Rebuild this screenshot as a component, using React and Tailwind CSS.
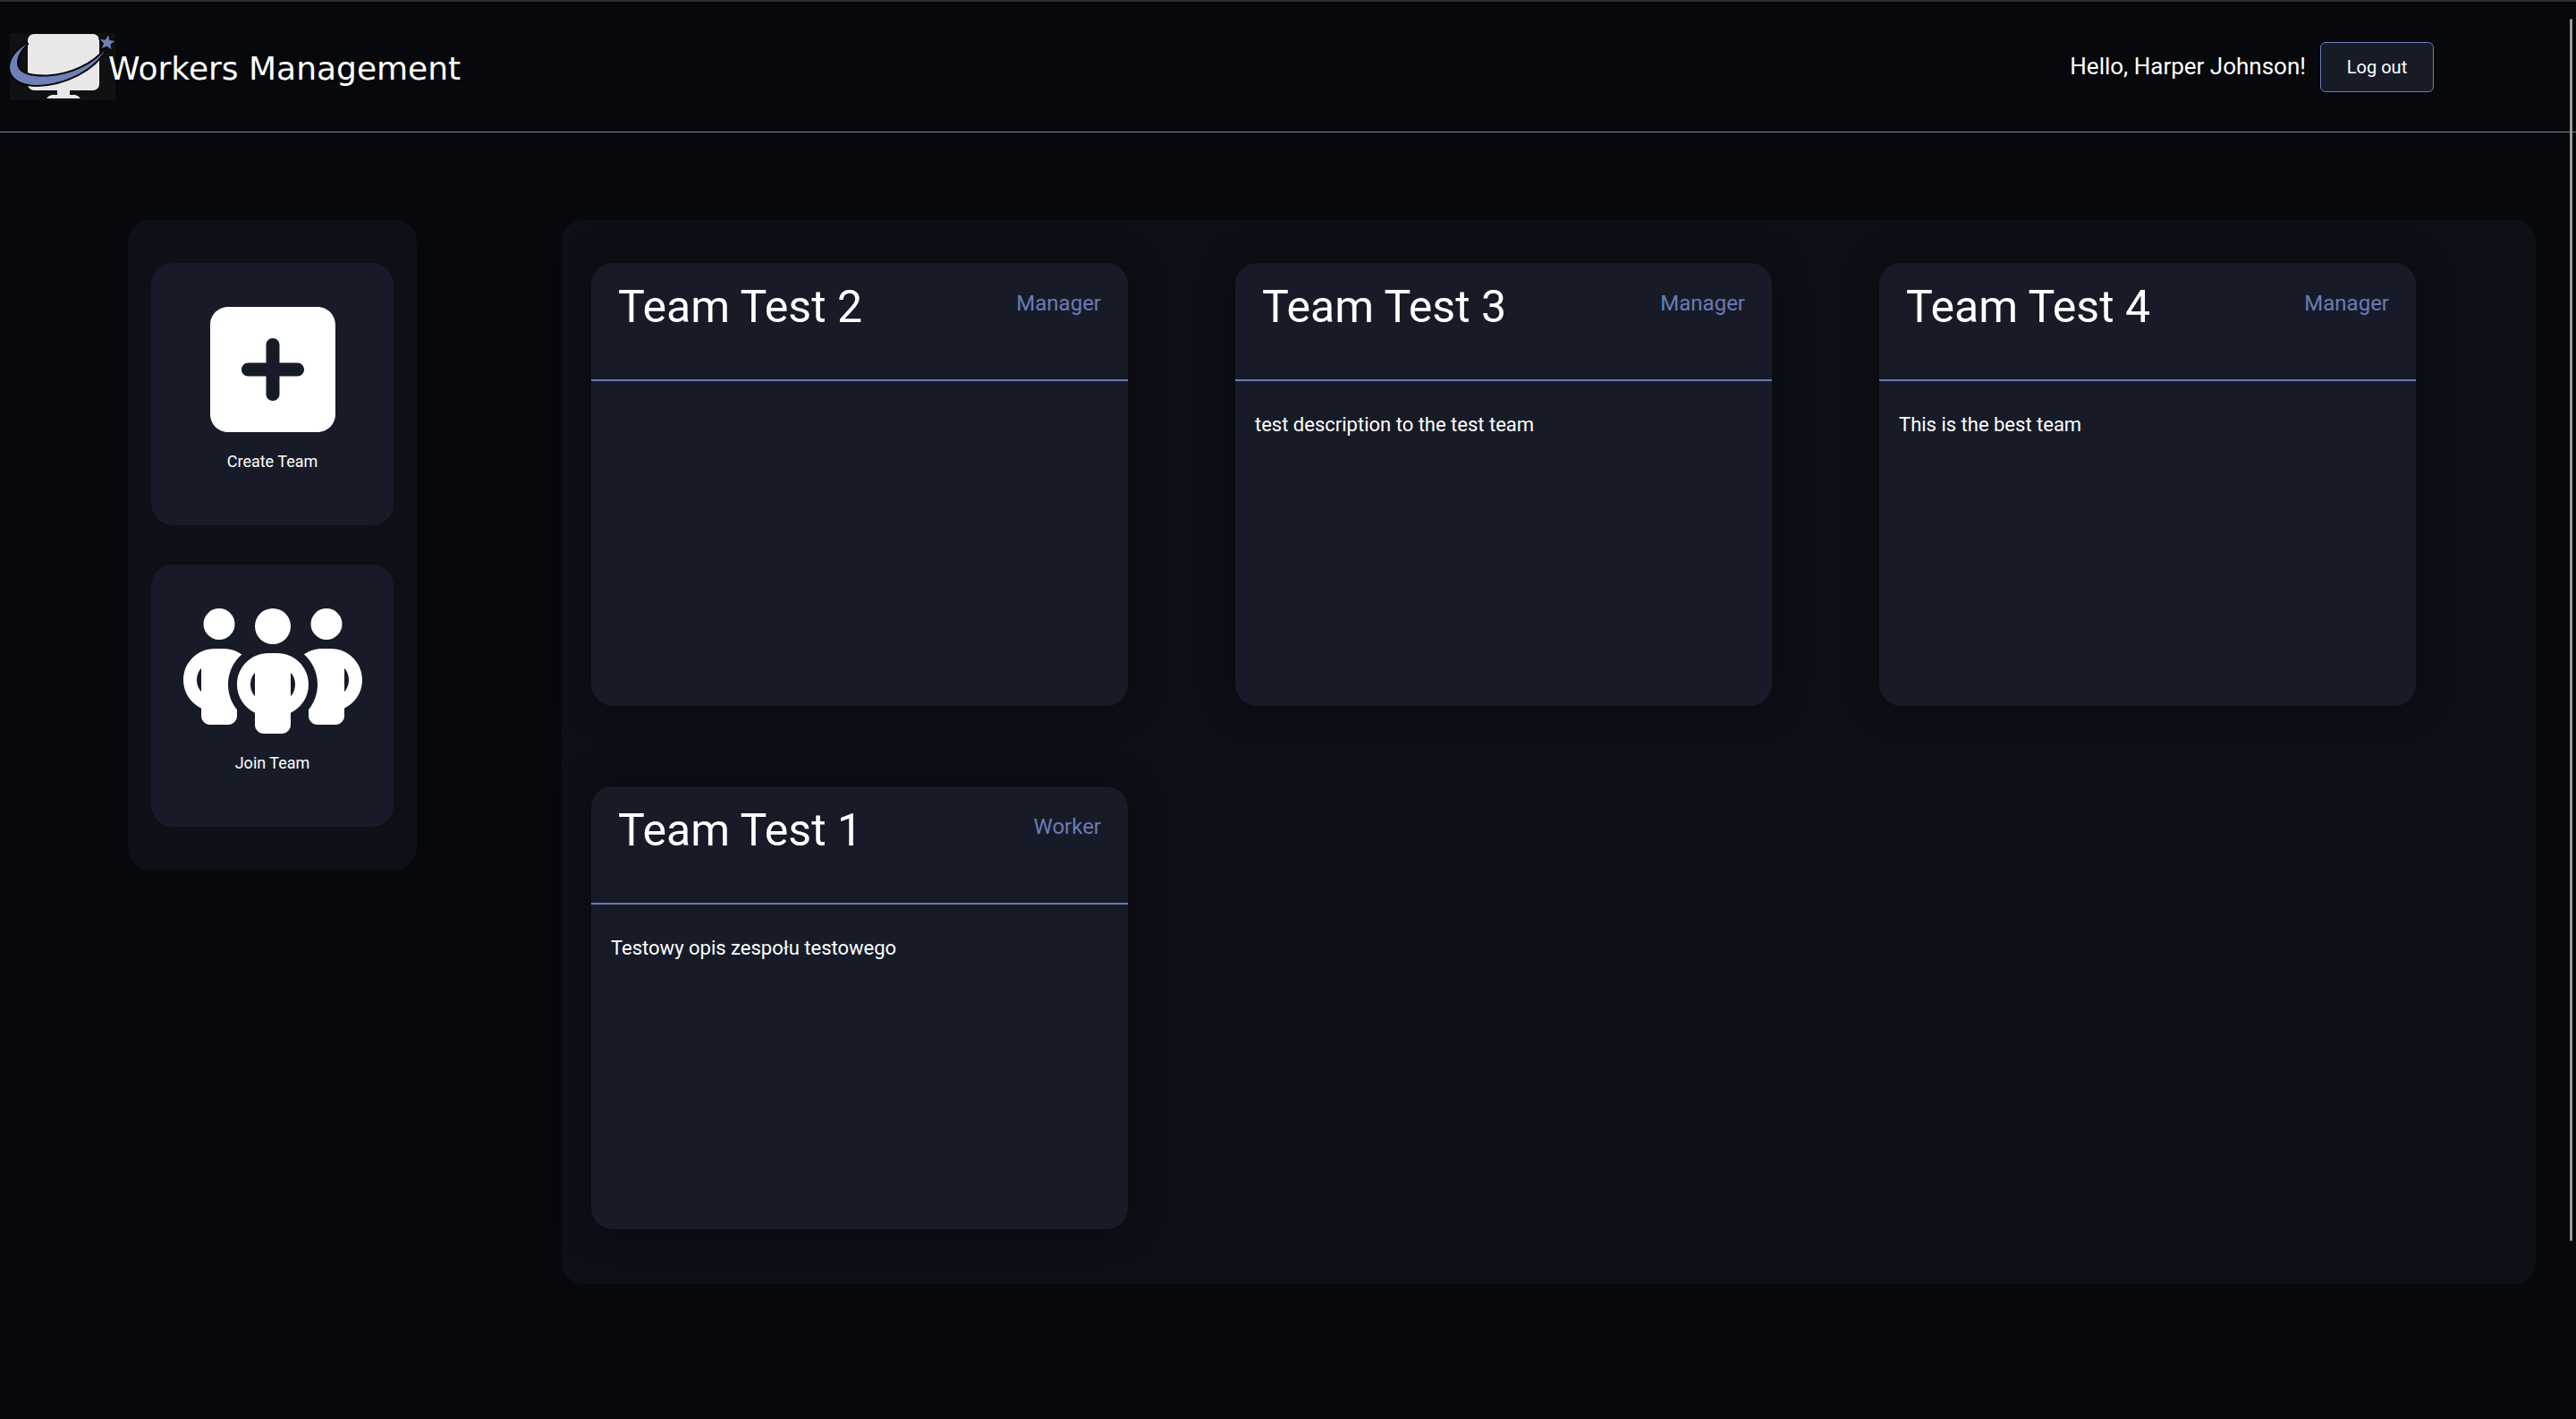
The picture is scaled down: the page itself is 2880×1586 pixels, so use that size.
import React from "react";
import { FaPeopleGroup, FaSquarePlus } from "react-icons/fa6";

const teams = [
  { name: "Team Test 2", role: "Manager", description: "" },
  { name: "Team Test 3", role: "Manager", description: "test description to the test team" },
  { name: "Team Test 4", role: "Manager", description: "This is the best team" },
  { name: "Team Test 1", role: "Worker", description: "Testowy opis zespołu testowego" },
];

function Logo() {
  return (
    <svg viewBox="0 0 118 75" className="h-[75px] w-[118px] shrink-0 bg-[#101112]" aria-hidden="true">
      <rect x="20" y="1" width="80" height="63" rx="7" fill="#e8e8e8" />
      <path d="M53 64h14v5h6q4 1 6 4H41q2-3 6-4h6z" fill="#e8e8e8" />
      <path
        d="M19 12C8 19 0 28 0 39C1 51 13 58 31 58C62 57 94 41 107 18C94 35 68 47 42 48.500C24 49 9 46 8 34C8 26 12 19 19 12Z"
        fill="#6f80b8"
        stroke="#07080c"
        strokeWidth="4"
        strokeLinejoin="round"
        paintOrder="stroke"
      />
      <path
        d="M110 2L111.500 8L117.500 9L112.500 12.500L113.500 18.500L108.500 14.500L103 17L105 11.500L101 7L107 7.500Z"
        fill="#6f80b8"
        stroke="#07080c"
        strokeWidth="2"
        paintOrder="stroke"
      />
    </svg>
  );
}

function ActionCard({ icon, label }) {
  return (
    <button
      type="button"
      className="flex h-[293px] w-full flex-col items-center gap-2 rounded-3xl bg-[#171b28] pt-[39px] text-lg leading-[30px] text-white"
    >
      {icon}
      <span>{label}</span>
    </button>
  );
}

function TeamCard({ team }) {
  return (
    <article className="h-[495px] w-[600px] rounded-3xl bg-[#171b28] shadow-[0_0_40px_rgba(0,0,0,0.5)]">
      <header className="flex h-[132px] items-start justify-between border-b-2 border-[#6a7bb5] px-[30px] pt-4">
        <h2 className="text-[50px] leading-[66px]">{team.name}</h2>
        <span className="pt-3 text-2xl leading-[34px] text-[#6a7bb5]">{team.role}</span>
      </header>
      <p className="px-[22px] pt-8 text-[22px] leading-[34px]">{team.description}</p>
    </article>
  );
}

export default function App() {
  return (
    <div className="relative min-h-screen border-t-2 border-[#2a2b2f] bg-[#07080b] font-['Roboto',sans-serif] text-white">
      <header className="flex h-[146px] items-center justify-between border-b border-[#6f80b8] pr-[159px] pl-[11px]">
        <div className="flex items-center">
          <Logo />
          <h1 className="-ml-2 pt-1 font-['DejaVu_Sans',sans-serif] text-4xl">Workers Management</h1>
        </div>
        <div className="flex items-center gap-4">
          <p className="text-[26px]">Hello, Harper Johnson!</p>
          <button
            type="button"
            className="h-14 w-[127px] rounded-md border border-[#6a7bb5] bg-[#171b28] text-xl"
          >
            Log out
          </button>
        </div>
      </header>

      <main className="flex items-start gap-[162px] pt-[98px] pr-[45px] pb-[120px] pl-[143px]">
        <aside className="flex w-[323px] shrink-0 flex-col gap-11 rounded-3xl bg-[#0d1017] px-[26px] py-12">
          <ActionCard icon={<FaSquarePlus className="h-[160px] w-[140px]" />} label="Create Team" />
          <ActionCard icon={<FaPeopleGroup className="h-[160px] w-[200px]" />} label="Join Team" />
        </aside>
        <section
          aria-label="Teams"
          className="flex grow flex-wrap gap-x-[120px] gap-y-[90px] rounded-3xl bg-[#0d1017] px-[33px] pt-12 pb-[61px]"
        >
          {teams.map((team) => (
            <TeamCard key={team.name} team={team} />
          ))}
        </section>
      </main>

      <div className="absolute top-[19px] right-1 h-[1366px] w-[3px] rounded-full bg-[#99999b]" />
    </div>
  );
}
